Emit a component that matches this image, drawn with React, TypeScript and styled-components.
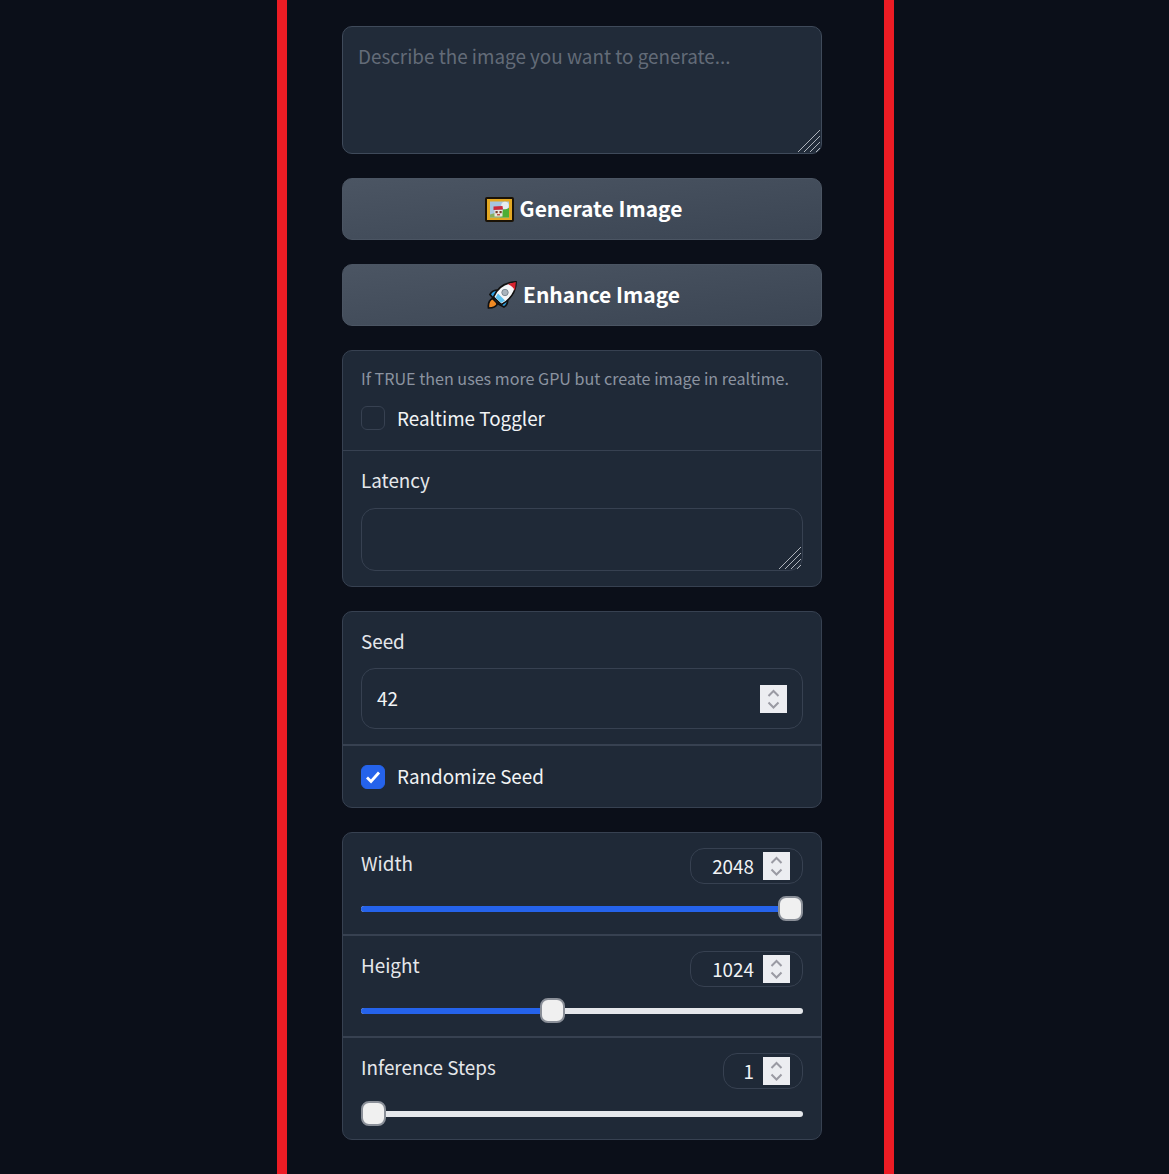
import React from "react";
import styled, { createGlobalStyle } from "styled-components";

const Global = createGlobalStyle`
  html, body { margin: 0; padding: 0; background: #0b0f19; }
  body { font-family: "Noto Sans CJK SC", "Noto Sans", sans-serif; }
  * { box-sizing: border-box; }
`;
const Frame = styled.div`
  width: 617px; height: 1174px; margin-left: 277px; overflow: hidden;
  border-left: 10px solid #ed1c24; border-right: 10px solid #ed1c24;
  padding: 26px 62px 0 55px;
  display: flex; flex-direction: column; gap: 24px;
`;
const PromptBox = styled.div`
  position: relative; height: 128px; background: #212b39;
  border: 1px solid #3f4a5a; border-radius: 10px;
  padding: 15px 15px;
`;
const Placeholder = styled.div`
  font-size: 18.85px; line-height: 28px; color: #636b78;
`;
const Handle = styled.svg`
  position: absolute; right: 0; bottom: 0; width: 24px; height: 24px;
`;
const Action = styled.button`
  height: 62px; width: 100%; border: 1px solid #4b5563; border-radius: 10px;
  background: linear-gradient(to bottom right, #4b5563, #3b4553);
  color: #fff; font: 600 21px/28px "Noto Sans CJK SC", sans-serif;
  display: flex; align-items: center; justify-content: center; gap: 6px; padding: 0 0 0 3px;
`;
const ActionText = styled.span`
  margin-bottom: 2px;
`;
const Panel = styled.section`
  background: #1f2937; border: 1px solid #374151; border-radius: 10px; overflow: hidden;
`;
const Block = styled.div<{ $h: number; $rule?: number }>`
  height: ${p => p.$h}px; padding: 0 18px;
  border-bottom: ${p => p.$rule ?? 0}px solid #374151;
  display: flex; flex-direction: column;
`;
const Info = styled.div`
  font-size: 16.12px; line-height: 24px; color: #8b93a0; margin-top: 15px; white-space: nowrap;
`;
const CheckRow = styled.label<{ $top: number }>`
  display: flex; align-items: center; gap: 12px; margin-top: ${p => p.$top}px;
  font-size: 18.85px; line-height: 24px; color: #f1f3f5;
`;
const CheckText = styled.span<{ $lift?: number }>`
  margin-bottom: ${p => p.$lift ?? 0}px;
`;
const Box = styled.span<{ $on?: boolean }>`
  width: 24px; height: 24px; border-radius: 6px; flex: none;
  border: 1px solid ${p => (p.$on ? "#2563eb" : "#374151")};
  background: ${p => (p.$on ? "#2563eb" : "#1f2937")};
  display: flex; align-items: center; justify-content: center;
`;
const Label = styled.div<{ $top: number }>`
  font-size: 18.85px; line-height: 26px; color: #e5e7eb; margin-top: ${p => p.$top}px;
`;
const Latency = styled.div`
  position: relative; height: 63px; margin-top: 15px;
  border: 1px solid #374151; border-radius: 14px;
`;
const SeedInput = styled.div`
  height: 61px; margin-top: 14px; border: 1px solid #374151; border-radius: 14px;
  display: flex; align-items: center; justify-content: space-between;
  padding: 0 15px; font-size: 18.85px; color: #f1f3f5;
`;
const Spinner = styled.span`
  width: 27px; height: 28px; background: #ecedf1; flex: none; display: flex;
`;
const Head = styled.div`
  display: flex; justify-content: space-between; align-items: flex-start;
  margin-top: 15px;
`;
const Pill = styled.div<{ $w: number }>`
  width: ${p => p.$w}px; height: 36px; border: 1px solid #374151; border-radius: 14px;
  display: flex; align-items: center; justify-content: flex-end; gap: 9px;
  padding-right: 12px; font-size: 18.85px; color: #f1f3f5;
`;
const NumberValue = styled.span`
  margin-bottom: 2px;
`;
const HeadLabel = styled.div<{ $top: number }>`
  font-size: 18.85px; line-height: 26px; color: #e5e7eb; margin-top: ${p => p.$top}px;
`;
const Track = styled.div<{ $top: number }>`
  position: relative; height: 6px; margin-top: ${p => p.$top}px;
  border-radius: 3px; background: #e5e7eb;
`;
const Fill = styled.div`
  height: 6px; border-radius: 3px; background: #2563eb;
`;
const Thumb = styled.div`
  position: absolute; top: -10px; width: 25px; height: 25px;
  background: #f0f0f0; border: 2px solid #8a8f98; border-radius: 8px;
`;

const Chevrons = () => (
  <svg viewBox="0 0 27 28" width="27" height="28" fill="none" stroke="#9a9aa3" strokeWidth="2">
    <path d="M8.5 11l5-5 5 5" />
    <path d="M8.5 17.5l5 5 5-5" />
  </svg>
);
const Grip = () => (
  <Handle viewBox="0 0 24 24" stroke="#aeb3bb" strokeWidth="1" fill="none">
    <path d="M1 23L23 1M7 23L23 7M13 23L23 13M19 23L23 19" />
  </Handle>
);
const PictureEmoji = () => (
  <svg width="29" height="25" viewBox="0 0 29 25">
    <rect x="1" y="1" width="27" height="23" fill="#e3a823" stroke="#1a1206" strokeWidth="2" rx="1" />
    <rect x="5" y="4.5" width="19" height="16" fill="#a6c6df" />
    <path d="M15 20.5l3-8 6-1.5v9.5z" fill="#4fae35" />
    <path d="M5 20.5v-3l5-1.5 8 4.5z" fill="#86b060" />
    <circle cx="20" cy="8.5" r="3.8" fill="#e6ecef" />
    <path d="M8.5 9.5l9-.5 .5 3.5-9.500 .5z" fill="#cb2a3a" />
    <path d="M9.5 13h8v6.5h-8z" fill="#ece6de" />
    <rect x="10.5" y="14" width="2.2" height="2.2" fill="#7a3b2c" />
    <rect x="14.5" y="14" width="2.2" height="2.2" fill="#7a3b2c" />
    <rect x="12" y="17" width="3" height="1.5" fill="#b9574a" />
  </svg>
);
const RocketEmoji = () => (
  <svg width="30" height="28" viewBox="0 0 30 28">
    <path d="M1.500 27c-.5-4 1-8 4-9.500l5 5c-1 3-5 4.500-9 4.500z" fill="#f08a24" stroke="#111" strokeWidth="1.700" />
    <path d="M3 13.500c1.500-3 4-4.500 8-4.500l-3.500 9.500z" fill="#2d9fe0" stroke="#111" strokeWidth="1.700" />
    <path d="M17 26c3-1.500 4-4.500 3.500-8.500l-10 5z" fill="#2d9fe0" stroke="#111" strokeWidth="1.700" />
    <path d="M6.500 16C10 7.500 18 1.500 29 .8c.2 10.200-6.500 18.200-14.500 22.700z" fill="#f4f6f8" stroke="#111" strokeWidth="1.700" />
    <path d="M20.500 3L28.800 1l-.8 8.500c-1.300-2.800-3.700-5.200-7.500-6.500z" fill="#d8232f" />
    <circle cx="18" cy="11.500" r="3.200" fill="#a9b4bd" stroke="#7f8a93" />
    <path d="M8.500 16.500l5.500 5.500 4-2.500-7-7z" fill="#5fc2ee" />
  </svg>
);
const Check = () => (
  <svg width="16" height="14" viewBox="0 0 16 14" fill="none" stroke="#fff" strokeWidth="2.8">
    <path d="M2 7.5l4 4 8-9" />
  </svg>
);
const Slider = ({ top, pct }: { top: number; pct: number }) => {
  const left = (417 * pct) / 100;
  return (
    <Track $top={top}>
      {pct > 0 && <Fill style={{ width: left + 12 }} />}
      <Thumb style={{ left }} />
    </Track>
  );
};

export default function App() {
  return (
    <>
      <Global />
      <Frame>
        <PromptBox>
          <Placeholder>Describe the image you want to generate...</Placeholder>
          <Grip />
        </PromptBox>
        <Action><PictureEmoji /><ActionText>Generate Image</ActionText></Action>
        <Action><RocketEmoji /><ActionText>Enhance Image</ActionText></Action>
        <Panel>
          <Block $h={100} $rule={1}>
            <Info>If TRUE then uses more GPU but create image in realtime.</Info>
            <CheckRow $top={16}><Box /><CheckText>Realtime Toggler</CheckText></CheckRow>
          </Block>
          <Block $h={135}>
            <Label $top={16}>Latency</Label>
            <Latency><Grip /></Latency>
          </Block>
        </Panel>
        <Panel>
          <Block $h={134} $rule={2}>
            <Label $top={16}>Seed</Label>
            <SeedInput><NumberValue>42</NumberValue><Spinner><Chevrons /></Spinner></SeedInput>
          </Block>
          <Block $h={61}>
            <CheckRow $top={18}><Box $on><Check /></Box><CheckText $lift={2}>Randomize Seed</CheckText></CheckRow>
          </Block>
        </Panel>
        <Panel>
          <Block $h={103} $rule={2}>
            <Head>
              <HeadLabel $top={2}>Width</HeadLabel>
              <Pill $w={113}><NumberValue>2048</NumberValue><Spinner><Chevrons /></Spinner></Pill>
            </Head>
            <Slider top={22} pct={100} />
          </Block>
          <Block $h={102} $rule={2}>
            <Head>
              <HeadLabel $top={1}>Height</HeadLabel>
              <Pill $w={113}><NumberValue>1024</NumberValue><Spinner><Chevrons /></Spinner></Pill>
            </Head>
            <Slider top={21} pct={43} />
          </Block>
          <Block $h={101}>
            <Head>
              <HeadLabel $top={1}>Inference Steps</HeadLabel>
              <Pill $w={80}><NumberValue>1</NumberValue><Spinner><Chevrons /></Spinner></Pill>
            </Head>
            <Slider top={22} pct={0} />
          </Block>
        </Panel>
      </Frame>
    </>
  );
}
